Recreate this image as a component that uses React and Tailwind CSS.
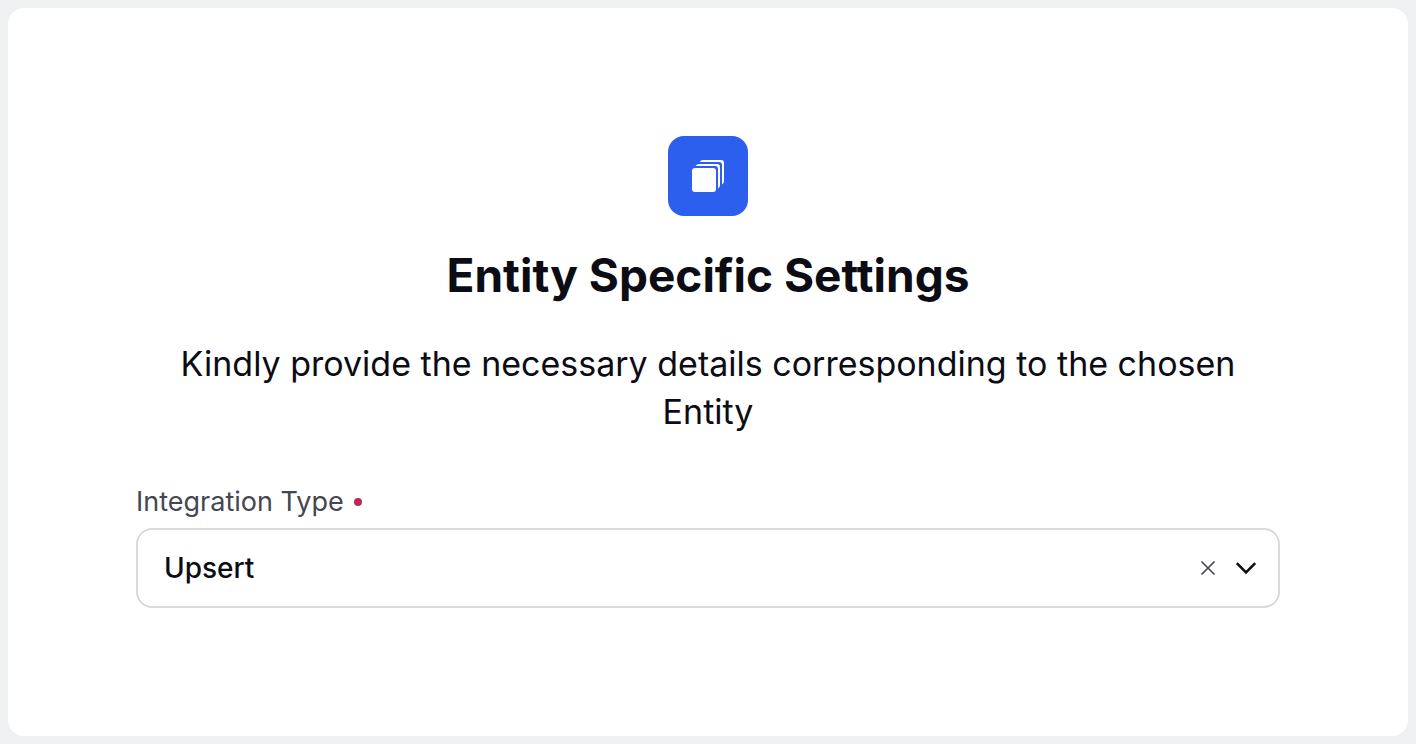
import { useState } from 'react'

const integrationTypes = ['Upsert', 'Insert', 'Update', 'Delete']

function StackIcon() {
  return (
    <svg className="h-8 w-8" viewBox="0 0 32 32" fill="#fff" aria-hidden="true">
      <rect x="0" y="8" width="24" height="24" rx="3" />
      <path d="M3.500 6Q4.800 4 7 4H25Q28 4 28 7V25Q28 27.200 26 28.500V9Q26 6 23 6Z" />
      <path d="M7.500 2Q8.800 0 11 0H29Q32 0 32 3V21Q32 23.200 30 24.500V5Q30 2 27 2Z" />
    </svg>
  )
}

export default function App() {
  const [type, setType] = useState('Upsert')

  return (
    <div className="min-h-screen bg-[#eff0f1] p-2 font-['Inter',sans-serif] text-[#0c0c14] flex">
      <main className="flex-1 rounded-2xl bg-white p-32">
        <header className="flex flex-col items-center text-center">
          <div className="flex h-20 w-20 items-center justify-center rounded-2xl bg-[#2c5fee]">
            <StackIcon />
          </div>
          <h1 className="mt-7 text-[46px] leading-[62px] font-bold">Entity Specific Settings</h1>
          <p className="mt-[34px] text-[34px] leading-12">
            Kindly provide the necessary details corresponding to the chosen Entity
          </p>
        </header>

        <div className="mt-12">
          <label htmlFor="integration-type" className="flex items-center gap-2.5 text-[27px] leading-9 text-[#464653]">
            Integration Type
            <span className="h-2 w-2 rounded-full bg-[#b82a57]" />
          </label>
          <div className="relative mt-2">
            <select
              id="integration-type"
              value={type}
              onChange={(e) => setType(e.target.value)}
              className="h-20 w-full appearance-none rounded-2xl border-2 border-[#dadadb] bg-white pr-24 pl-[26px] text-[28px] font-medium"
            >
              <option value="" />
              {integrationTypes.map((name) => (
                <option key={name}>{name}</option>
              ))}
            </select>
            <button
              type="button"
              aria-label="Clear"
              onClick={() => setType('')}
              className="absolute inset-y-0 right-16 my-auto h-4 w-4"
            >
              <svg className="h-4 w-4" viewBox="0 0 16 16" fill="none" stroke="#464653" strokeWidth="1.600">
                <path d="M1.500 1.500l13 13M14.500 1.500l-13 13" />
              </svg>
            </button>
            <svg
              className="pointer-events-none absolute inset-y-0 right-5 my-auto h-6 w-7"
              viewBox="0 0 28 24"
              fill="none"
              stroke="#0c0c14"
              strokeWidth="2.500"
            >
              <path d="M4.800 7.200l9.200 9.200l9.200-9.200" />
            </svg>
          </div>
        </div>
      </main>
    </div>
  )
}
